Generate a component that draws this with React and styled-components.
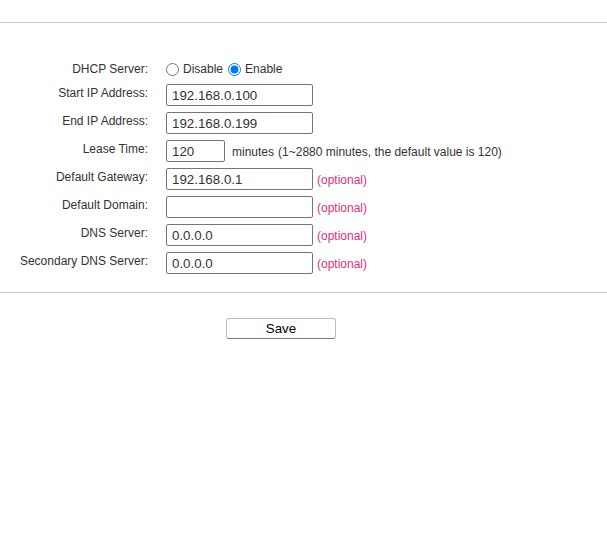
import styled, { createGlobalStyle } from "styled-components"

const Global = createGlobalStyle`
  body {
    margin: 0;
    background: #fff;
    font-family: "Liberation Sans", Arial, sans-serif;
    font-size: 12px;
    color: #333;
  }
`

const Page = styled.div`
  width: 607px;
`
const TopBar = styled.div`
  height: 22px;
  border-bottom: 1px solid #ccc;
`
const Form = styled.div`
  display: grid;
  grid-template-columns: 148px auto;
  column-gap: 18px;
  row-gap: 6px;
  padding: 37px 0 18px;
  border-bottom: 1px solid #ccc;
`
const Label = styled.div`
  text-align: right;
  padding-top: 2px;
  line-height: 14px;
  white-space: nowrap;
`
const Field = styled.div`
  display: flex;
  align-items: center;
  gap: 4px;
  height: ${p => (p.$short ? "18px" : "22px")};
`
const Text = styled.input`
  box-sizing: border-box;
  width: ${p => p.$w || 147}px;
  height: 22px;
  border: 1px solid #767676;
  border-radius: 2px;
  padding: 1px 5px;
  font-family: "Liberation Sans", Arial, sans-serif;
  font-size: 13.33px;
  color: #333;
  margin: 0;
`
const Radio = styled.label`
  display: flex;
  align-items: center;
  gap: 4px;
  margin-right: 1px;
  input {
    margin: 0;
    width: 13px;
    height: 13px;
  }
`
const Hint = styled.span`
  color: ${p => (p.$optional ? "#d9307a" : "#333")};
  padding-top: ${p => (p.$optional ? "1px" : "2px")};
  margin-left: ${p => (p.$optional ? "0" : "3px")};
  white-space: nowrap;
`
const Unit = styled.span`
  margin-right: 4px;
`
const Footer = styled.div`
  width: 562px;
  display: flex;
  justify-content: center;
  padding-top: 25px;
`
const Button = styled.button`
  width: 110px;
  height: 21px;
  background: #fff;
  border: 1px solid #bdbdbd;
  border-bottom-color: #7a7a7a;
  border-radius: 3px;
  font-family: "Liberation Sans", Arial, sans-serif;
  font-size: 13.33px;
  color: #000;
  padding: 0;
`

const rows = [
  { label: "Start IP Address:", value: "192.168.0.100" },
  { label: "End IP Address:", value: "192.168.0.199" },
  { label: "Lease Time:", value: "120", w: 59, hint: "(1~2880 minutes, the default value is 120)" },
  { label: "Default Gateway:", value: "192.168.0.1", optional: true },
  { label: "Default Domain:", value: "", optional: true },
  { label: "DNS Server:", value: "0.0.0.0", optional: true },
  { label: "Secondary DNS Server:", value: "0.0.0.0", optional: true },
]

const App = () => {
  return (
    <Page>
      <Global />
      <TopBar />
      <Form>
        <Label>DHCP Server:</Label>
        <Field $short>
          <Radio><input type="radio" name="dhcp" />Disable</Radio>
          <Radio><input type="radio" name="dhcp" defaultChecked />Enable</Radio>
        </Field>
        {rows.map(r => (
          <>
            <Label key={r.label + "l"}>{r.label}</Label>
            <Field key={r.label + "f"}>
              <Text defaultValue={r.value} $w={r.w} />
              {r.hint && <Hint><Unit>minutes</Unit>{r.hint}</Hint>}
              {r.optional && <Hint $optional>(optional)</Hint>}
            </Field>
          </>
        ))}
      </Form>
      <Footer>
        <Button>Save</Button>
      </Footer>
    </Page>
  )
}

export default App
